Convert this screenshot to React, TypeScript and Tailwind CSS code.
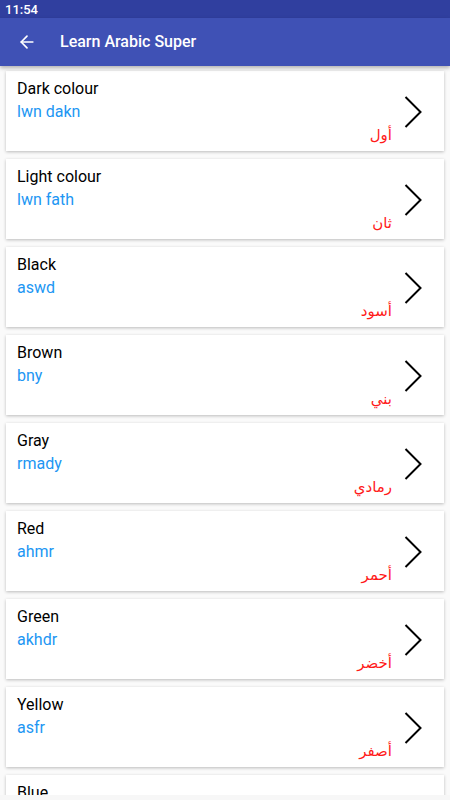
import { ArrowLeft } from "lucide-react";

type Word = {
    english: string
    latin: string
    arabic: string
}

const words: Word[] = [
    { english: "Dark colour", latin: "lwn dakn", arabic: "أول" },
    { english: "Light colour", latin: "lwn fath", arabic: "ثان" },
    { english: "Black", latin: "aswd", arabic: "أسود" },
    { english: "Brown", latin: "bny", arabic: "بني" },
    { english: "Gray", latin: "rmady", arabic: "رمادي" },
    { english: "Red", latin: "ahmr", arabic: "أحمر" },
    { english: "Green", latin: "akhdr", arabic: "أخضر" },
    { english: "Yellow", latin: "asfr", arabic: "أصفر" },
    { english: "Blue", latin: "azrq", arabic: "أزرق" },
];

const Chevron = () => (
    <svg width="18" height="32" viewBox="0 0 18 32" fill="none">
        <polyline points="1.5,1 16.5,16 1.5,31" stroke="#000" strokeWidth="2" strokeLinejoin="miter" />
    </svg>
);

const WordCard = ({ item }: { item: Word }) => {
    return (
        <div className="mx-[6px] h-[80px] shrink-0 flex bg-white shadow-[0_1px_3px_rgba(0,0,0,0.25)]">
            <div className="flex-1 flex flex-col pl-[11px] pt-[6px]">
                <p className="text-base leading-[23px] text-black">{item.english}</p>
                <p className="text-base leading-[23px] text-[#2196F3]">{item.latin}</p>
                <p dir="rtl" className="text-right mt-[1px] text-[15px] leading-[23px] text-[#ff1a1a] [font-family:'DejaVu_Sans',sans-serif]">
                    {item.arabic}
                </p>
            </div>
            <div className="self-center ml-[12px] mr-[22px] mt-[1px]">
                <Chevron />
            </div>
        </div>
    );
}

const App = () => {
    return (
        <div className="w-[450px] h-[800px] flex flex-col bg-[#fafafa] overflow-hidden [font-family:Roboto,'Noto_Sans',sans-serif]">
            <div className="h-[18px] shrink-0 bg-[#303F9F] flex items-center px-[5px]">
                <span className="text-[13px] font-medium text-white leading-none">11:54</span>
            </div>
            <div className="h-[48px] shrink-0 bg-[#3F51B5] flex items-center shadow-[0_2px_4px_rgba(0,0,0,0.3)] z-10">
                <div className="w-[60px] flex items-center pl-[17px]">
                    <ArrowLeft size={20} color="#fff" strokeWidth={2} />
                </div>
                <h1 className="text-base font-medium text-white">Learn Arabic Super</h1>
            </div>
            <div className="h-[729px] shrink-0 overflow-hidden flex flex-col gap-[8px] pt-[5px]">
                {words.map((item) => (
                    <WordCard key={item.english} item={item} />
                ))}
            </div>
            <div className="flex-1 bg-[#f7f7f7]" />
        </div>
    );
}

export default App;
